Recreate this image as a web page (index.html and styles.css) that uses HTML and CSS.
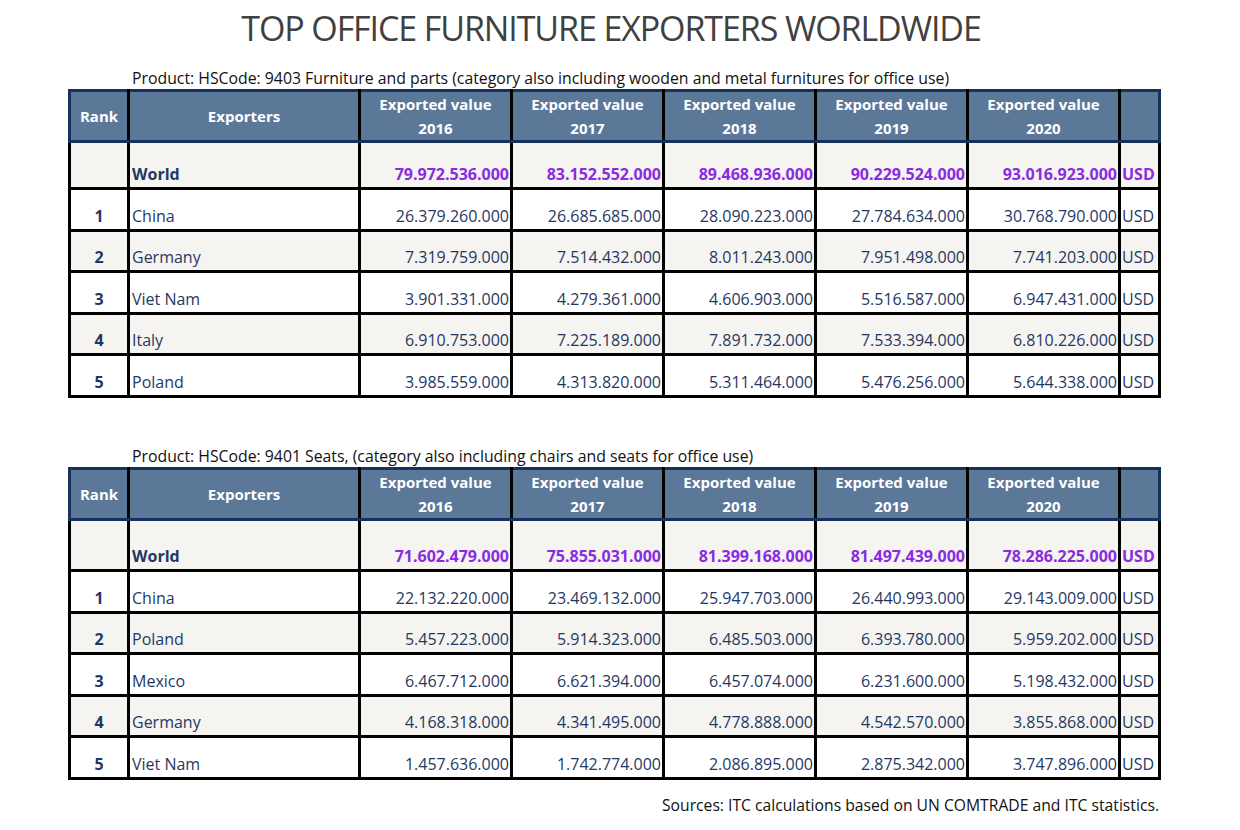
FILE: index.html
```html
<!DOCTYPE html>
<html>
<head>
<meta charset="utf-8">
<link rel="stylesheet" href="styles.css">
</head>
<body>
<div class="page">
  <h1 class="title">TOP OFFICE FURNITURE EXPORTERS WORLDWIDE</h1>

  <p class="caption">Product: HSCode: 9403 Furniture and parts (category also including wooden and metal furnitures for office use)</p>
  <table class="data">
    <colgroup>
      <col class="c-rank"><col class="c-name"><col class="c-val"><col class="c-val"><col class="c-val"><col class="c-val"><col class="c-val"><col class="c-unit">
    </colgroup>
    <thead>
      <tr class="head">
        <th>Rank</th><th>Exporters</th>
        <th>Exported value<br>2016</th><th>Exported value<br>2017</th><th>Exported value<br>2018</th><th>Exported value<br>2019</th><th>Exported value<br>2020</th><th></th>
      </tr>
    </thead>
    <tbody>
      <tr class="world"><td></td><td class="name">World</td><td class="num">79.972.536.000</td><td class="num">83.152.552.000</td><td class="num">89.468.936.000</td><td class="num">90.229.524.000</td><td class="num">93.016.923.000</td><td class="unit">USD</td></tr>
      <tr class="r-white tall"><td class="rank">1</td><td class="name">China</td><td class="num">26.379.260.000</td><td class="num">26.685.685.000</td><td class="num">28.090.223.000</td><td class="num">27.784.634.000</td><td class="num">30.768.790.000</td><td class="unit">USD</td></tr>
      <tr class="r-grey"><td class="rank">2</td><td class="name">Germany</td><td class="num">7.319.759.000</td><td class="num">7.514.432.000</td><td class="num">8.011.243.000</td><td class="num">7.951.498.000</td><td class="num">7.741.203.000</td><td class="unit">USD</td></tr>
      <tr class="r-white tall"><td class="rank">3</td><td class="name">Viet Nam</td><td class="num">3.901.331.000</td><td class="num">4.279.361.000</td><td class="num">4.606.903.000</td><td class="num">5.516.587.000</td><td class="num">6.947.431.000</td><td class="unit">USD</td></tr>
      <tr class="r-grey"><td class="rank">4</td><td class="name">Italy</td><td class="num">6.910.753.000</td><td class="num">7.225.189.000</td><td class="num">7.891.732.000</td><td class="num">7.533.394.000</td><td class="num">6.810.226.000</td><td class="unit">USD</td></tr>
      <tr class="r-white tall"><td class="rank">5</td><td class="name">Poland</td><td class="num">3.985.559.000</td><td class="num">4.313.820.000</td><td class="num">5.311.464.000</td><td class="num">5.476.256.000</td><td class="num">5.644.338.000</td><td class="unit">USD</td></tr>
    </tbody>
  </table>

  <p class="caption second">Product: HSCode: 9401 Seats, (category also including chairs and seats for office use)</p>
  <table class="data seats">
    <colgroup>
      <col class="c-rank"><col class="c-name"><col class="c-val"><col class="c-val"><col class="c-val"><col class="c-val"><col class="c-val"><col class="c-unit">
    </colgroup>
    <thead>
      <tr class="head">
        <th>Rank</th><th>Exporters</th>
        <th>Exported value<br>2016</th><th>Exported value<br>2017</th><th>Exported value<br>2018</th><th>Exported value<br>2019</th><th>Exported value<br>2020</th><th></th>
      </tr>
    </thead>
    <tbody>
      <tr class="world"><td></td><td class="name">World</td><td class="num">71.602.479.000</td><td class="num">75.855.031.000</td><td class="num">81.399.168.000</td><td class="num">81.497.439.000</td><td class="num">78.286.225.000</td><td class="unit">USD</td></tr>
      <tr class="r-white tall"><td class="rank">1</td><td class="name">China</td><td class="num">22.132.220.000</td><td class="num">23.469.132.000</td><td class="num">25.947.703.000</td><td class="num">26.440.993.000</td><td class="num">29.143.009.000</td><td class="unit">USD</td></tr>
      <tr class="r-grey"><td class="rank">2</td><td class="name">Poland</td><td class="num">5.457.223.000</td><td class="num">5.914.323.000</td><td class="num">6.485.503.000</td><td class="num">6.393.780.000</td><td class="num">5.959.202.000</td><td class="unit">USD</td></tr>
      <tr class="r-white tall"><td class="rank">3</td><td class="name">Mexico</td><td class="num">6.467.712.000</td><td class="num">6.621.394.000</td><td class="num">6.457.074.000</td><td class="num">6.231.600.000</td><td class="num">5.198.432.000</td><td class="unit">USD</td></tr>
      <tr class="r-grey"><td class="rank">4</td><td class="name">Germany</td><td class="num">4.168.318.000</td><td class="num">4.341.495.000</td><td class="num">4.778.888.000</td><td class="num">4.542.570.000</td><td class="num">3.855.868.000</td><td class="unit">USD</td></tr>
      <tr class="r-white tall"><td class="rank">5</td><td class="name">Viet Nam</td><td class="num">1.457.636.000</td><td class="num">1.742.774.000</td><td class="num">2.086.895.000</td><td class="num">2.875.342.000</td><td class="num">3.747.896.000</td><td class="unit">USD</td></tr>
    </tbody>
  </table>

  <p class="source">Sources: ITC calculations based on UN COMTRADE and ITC statistics.</p>
</div>
</body>
</html>
```

FILE: styles.css
```css
html, body {
  margin: 0;
  padding: 0;
  background: #ffffff;
}

body {
  font-family: "Open Sans", "Noto Sans", "Liberation Sans", sans-serif;
  color: #1f3864;
}

.page {
  width: 1093px;
  margin-left: 68px;
  padding-top: 6px;
}

.title {
  margin: 0;
  text-align: center;
  font-family: "Open Sans", "Noto Sans", sans-serif;
  font-weight: 400;
  font-size: 34px;
  line-height: 44px;
  color: #404040;
  letter-spacing: -1.1px;
  width: 1086px;
}

.caption {
  margin: 18px 0 0 64px;
  font-size: 15.8px;
  line-height: 21px;
  color: #111111;
  letter-spacing: 0;
}

.caption.second {
  margin-top: 48px;
}

.data {
  border-collapse: collapse;
  table-layout: fixed;
  width: 1092px;
  margin-top: 0;
}

.c-rank { width: 59px; }
.c-name { width: 231px; }
.c-val { width: 152px; }
.c-unit { width: 40px; }

.data th,
.data td {
  border: 3px solid #000000;
  padding: 0;
  white-space: nowrap;
  overflow: hidden;
}

.head th {
  background: #5b7899;
  color: #ffffff;
  font-size: 15px;
  font-weight: 700;
  line-height: 24px;
  height: 48px;
  text-align: center;
  vertical-align: middle;
  border-top-color: #16325a;
  border-bottom-color: #16325a;
  letter-spacing: 0;
}

.head th:first-child { border-left-color: #16325a; }
.head th:last-child { border-right-color: #16325a; }

.data td {
  font-size: 16px;
  vertical-align: bottom;
  line-height: 20px;
  padding-bottom: 3px;
  letter-spacing: 0;
}

.world td {
  background: #f5f4f0;
  height: 41px;
  font-weight: 700;
  color: #8a2be2;
}

.seats .world td {
  height: 45px;
}

.world td.name {
  color: #1f3864;
}

.r-white td {
  background: #ffffff;
  height: 36px;
}

.r-grey td {
  background: #f5f4f0;
  height: 35px;
}

.rank {
  text-align: center;
  font-weight: 700;
}

.name {
  text-align: left;
  padding-left: 2px !important;
}

.num {
  text-align: right;
  padding-right: 1px !important;
}

.unit {
  text-align: left;
  padding-left: 1px !important;
}

.source {
  margin: 15px 2px 0 0;
  text-align: right;
  font-size: 15.7px;
  line-height: 21px;
  color: #111111;
  letter-spacing: 0;
}
```
